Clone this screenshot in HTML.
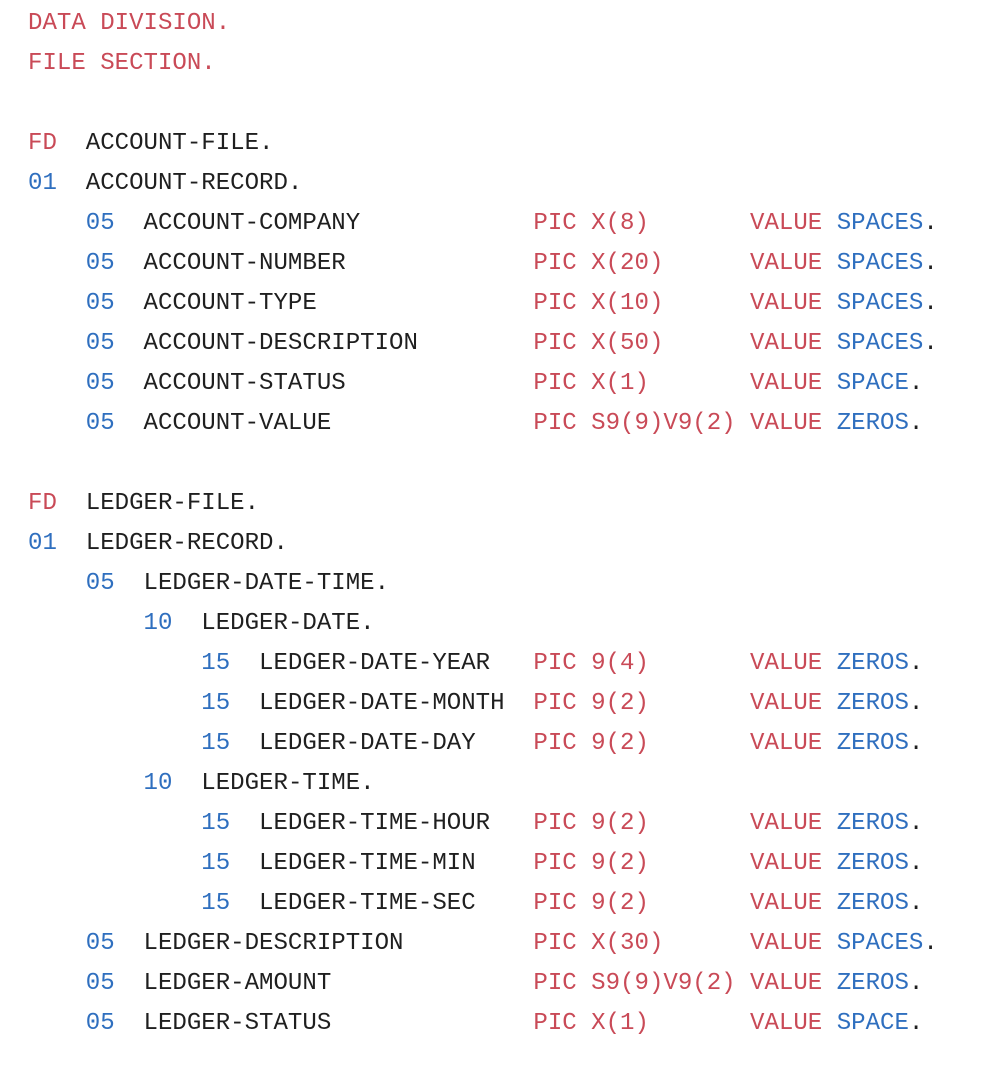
<!DOCTYPE html>
<html><head><meta charset="utf-8"><style>
html,body{margin:0;padding:0;background:#fff;width:986px;height:1068px;overflow:hidden}
pre{margin:0;position:absolute;left:28px;top:4px;font-family:"Liberation Mono",monospace;font-size:24.07px;line-height:40px;color:#1f1f1f}
.r{color:#c94a57}.b{color:#2f6fbf}
</style></head><body><pre><span class="r">DATA DIVISION.</span>
<span class="r">FILE SECTION.</span>

<span class="r">FD</span>  ACCOUNT-FILE.
<span class="b">01</span>  ACCOUNT-RECORD.
    <span class="b">05</span>  ACCOUNT-COMPANY            <span class="r">PIC X(8)</span>       <span class="r">VALUE</span> <span class="b">SPACES</span>.
    <span class="b">05</span>  ACCOUNT-NUMBER             <span class="r">PIC X(20)</span>      <span class="r">VALUE</span> <span class="b">SPACES</span>.
    <span class="b">05</span>  ACCOUNT-TYPE               <span class="r">PIC X(10)</span>      <span class="r">VALUE</span> <span class="b">SPACES</span>.
    <span class="b">05</span>  ACCOUNT-DESCRIPTION        <span class="r">PIC X(50)</span>      <span class="r">VALUE</span> <span class="b">SPACES</span>.
    <span class="b">05</span>  ACCOUNT-STATUS             <span class="r">PIC X(1)</span>       <span class="r">VALUE</span> <span class="b">SPACE</span>.
    <span class="b">05</span>  ACCOUNT-VALUE              <span class="r">PIC S9(9)V9(2)</span> <span class="r">VALUE</span> <span class="b">ZEROS</span>.

<span class="r">FD</span>  LEDGER-FILE.
<span class="b">01</span>  LEDGER-RECORD.
    <span class="b">05</span>  LEDGER-DATE-TIME.
        <span class="b">10</span>  LEDGER-DATE.
            <span class="b">15</span>  LEDGER-DATE-YEAR   <span class="r">PIC 9(4)</span>       <span class="r">VALUE</span> <span class="b">ZEROS</span>.
            <span class="b">15</span>  LEDGER-DATE-MONTH  <span class="r">PIC 9(2)</span>       <span class="r">VALUE</span> <span class="b">ZEROS</span>.
            <span class="b">15</span>  LEDGER-DATE-DAY    <span class="r">PIC 9(2)</span>       <span class="r">VALUE</span> <span class="b">ZEROS</span>.
        <span class="b">10</span>  LEDGER-TIME.
            <span class="b">15</span>  LEDGER-TIME-HOUR   <span class="r">PIC 9(2)</span>       <span class="r">VALUE</span> <span class="b">ZEROS</span>.
            <span class="b">15</span>  LEDGER-TIME-MIN    <span class="r">PIC 9(2)</span>       <span class="r">VALUE</span> <span class="b">ZEROS</span>.
            <span class="b">15</span>  LEDGER-TIME-SEC    <span class="r">PIC 9(2)</span>       <span class="r">VALUE</span> <span class="b">ZEROS</span>.
    <span class="b">05</span>  LEDGER-DESCRIPTION         <span class="r">PIC X(30)</span>      <span class="r">VALUE</span> <span class="b">SPACES</span>.
    <span class="b">05</span>  LEDGER-AMOUNT              <span class="r">PIC S9(9)V9(2)</span> <span class="r">VALUE</span> <span class="b">ZEROS</span>.
    <span class="b">05</span>  LEDGER-STATUS              <span class="r">PIC X(1)</span>       <span class="r">VALUE</span> <span class="b">SPACE</span>.
</pre></body></html>
